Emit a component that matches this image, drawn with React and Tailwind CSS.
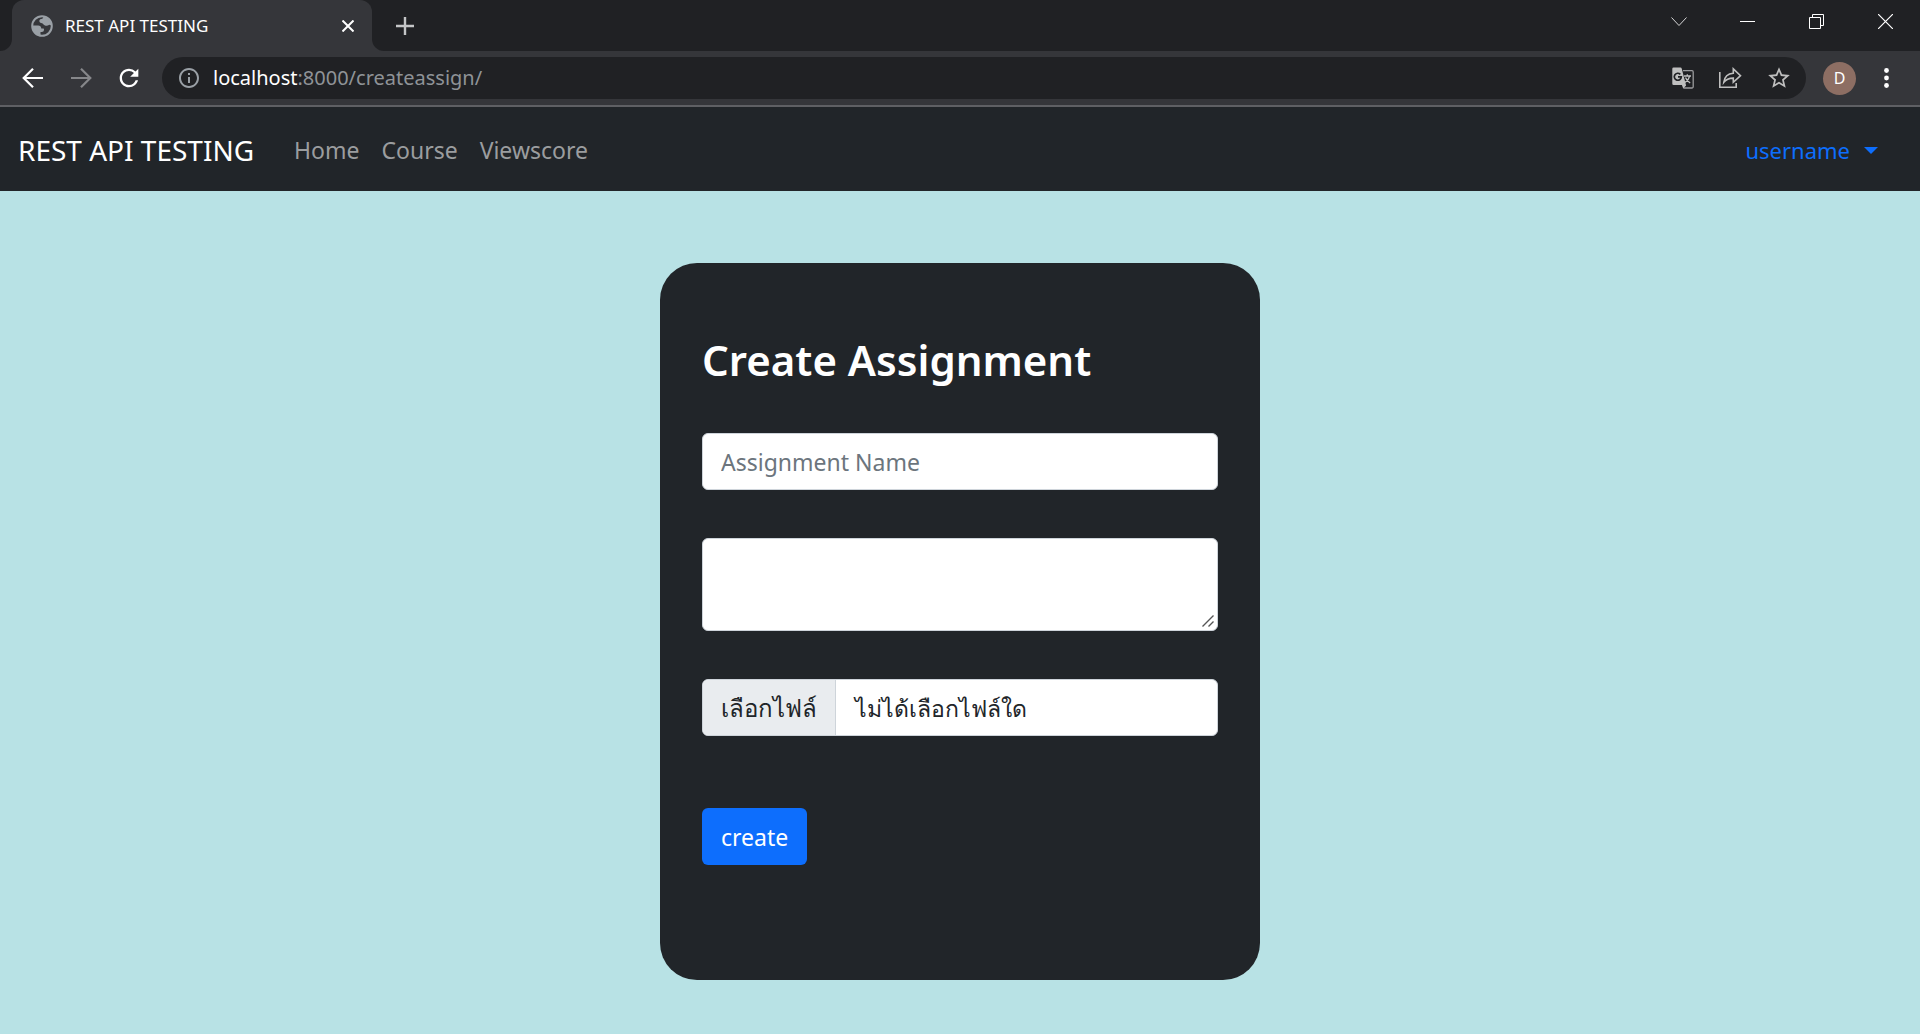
import { MdRefresh, MdInfoOutline, MdStarBorder } from "react-icons/md";

function GlobeIcon() {
  return (
    <svg viewBox="0 0 22 22" className="size-[22px] shrink-0" aria-hidden="true">
      <circle cx="11" cy="11" r="9.8" fill="none" stroke="#9aa0a6" strokeWidth="2" />
      <path
        fill="#9aa0a6"
        d="M12.5 1.5c-.3 1.6-.8 2.2-2.2 2.4-1.7.3-2.2 1.2-1.9 2.7.4 1.5 1.4 1.3 2.6 1.6 1.6.4 1.5 1.9 3 2.3 1.6.4 3 .1 4.3-.7l2.2.8A9.8 9.8 0 0 0 12.5 1.5zM1.5 10.5h5.7c1.9.1 3 1.1 3.1 2.9l2.3.2c.7.6.5 1.9-.1 2.6-.7.8-1.9.7-3 .7v3.6c-4.5-.5-8-4.5-8-10z"
      />
    </svg>
  );
}

function ArrowIcon({ className }) {
  return (
    <svg viewBox="0 0 28 28" className={className} fill="none" stroke="currentColor" strokeWidth="2.2" aria-hidden="true">
      <path d="M24 14H5.5M14 4.700L4.700 14l9.300 9.300" />
    </svg>
  );
}

function TranslateIcon() {
  return (
    <svg viewBox="0 0 22 22" className="size-[22px]" aria-hidden="true">
      <path d="M11 3.7h9a1.2 1.2 0 0 1 1.2 1.2v14.9a1.2 1.2 0 0 1-1.2 1.2h-8.5" fill="none" stroke="#9a9b9d" strokeWidth="1.3" />
      <path d="M1.6.5h6.9a1.3 1.3 0 0 1 1.2.9l4.4 17-2.9 3.1-1.3-3.5H1.6a1.3 1.3 0 0 1-1.3-1.3V1.8A1.3 1.3 0 0 1 1.6.5z" fill="#bfbfbf" />
      <path d="M8.3 7.3A3.5 3.5 0 1 0 9.3 9.8H6" fill="none" stroke="#202124" strokeWidth="1.7" />
      <path d="M12 9h7M15.3 7.3V9M17.7 9c-.7 3-2.5 5-4.7 6.5M13.5 10.5c.8 2.2 2.5 4 4.7 5.5" fill="none" stroke="#bfbfbf" strokeWidth="1.3" />
    </svg>
  );
}

function ShareIcon() {
  return (
    <svg viewBox="0 0 24 22" className="h-[22px] w-6" fill="none" stroke="#bfbfbf" aria-hidden="true">
      <path d="M1.8 5v15.3h16.4V16" strokeWidth="1.6" />
      <path d="M5.8 15.3c.7-5.6 3.7-8.8 9.5-9.1V1.8l7.2 6.9-7.2 6.6v-4.2c-4.2 0-7.3 1.2-9.5 4.2z" strokeWidth="1.6" />
    </svg>
  );
}

function TitleBar() {
  return (
    <header className="flex h-[51px] items-stretch justify-between bg-[#202124]">
      <div className="flex">
        <div className="w-3 bg-[#35363a]">
          <div className="h-full rounded-br-xl bg-[#202124]" />
        </div>
        <div className="flex w-[360px] items-center rounded-t-xl bg-[#35363a] pl-[19px] pr-3">
          <GlobeIcon />
          <span className="ml-3 grow text-[17px] leading-6 text-white">REST API TESTING</span>
          <button type="button" aria-label="Close tab" className="flex size-6 items-center justify-center">
            <svg viewBox="0 0 12 12" className="size-3" stroke="#fff" strokeWidth="2" aria-hidden="true">
              <path d="M.5.5l11 11M11.5.5l-11 11" />
            </svg>
          </button>
        </div>
        <div className="bg-[#35363a]">
          <div className="flex h-full items-center rounded-bl-xl bg-[#202124] pl-[21px]">
            <button type="button" aria-label="New tab" className="flex size-6 items-center justify-center">
              <svg viewBox="0 0 18 18" className="size-[18px]" stroke="#c4c5c7" strokeWidth="2.4" aria-hidden="true">
                <path d="M9 0v18M0 9h18" />
              </svg>
            </button>
          </div>
        </div>
      </div>
      <div className="flex h-[43px] items-center">
        <button type="button" aria-label="Search tabs" className="flex w-[69px] justify-center">
          <svg viewBox="0 0 16 10" className="h-2.5 w-4" fill="none" stroke="#d5d6d7" aria-hidden="true">
            <path d="M.5.5L8 8.5 15.5.5" />
          </svg>
        </button>
        <button type="button" aria-label="Minimize" className="flex w-[69px] justify-center">
          <svg viewBox="0 0 15 1" className="h-px w-[15px]" fill="#fff" aria-hidden="true">
            <path d="M0 0h15v1H0z" />
          </svg>
        </button>
        <button type="button" aria-label="Restore" className="flex w-[69px] justify-center">
          <svg viewBox="0 0 15 15" className="size-[15px]" fill="none" stroke="#fff" aria-hidden="true">
            <path d="M.5 3.5h11v11H.5zM3.5 3.5v-3h11v11h-3" />
          </svg>
        </button>
        <button type="button" aria-label="Close window" className="flex w-[69px] justify-center">
          <svg viewBox="0 0 15 15" className="size-[15px]" stroke="#fff" strokeWidth="1.2" aria-hidden="true">
            <path d="M0 0l15 15M15 0L0 15" />
          </svg>
        </button>
      </div>
    </header>
  );
}

function Toolbar() {
  return (
    <div className="flex items-center border-b-2 border-[#5f6064] bg-[#35363a] py-1.5 pl-[19px] pr-[22px]">
      <div className="flex gap-5">
        <button type="button" aria-label="Back"><ArrowIcon className="size-7 text-white" /></button>
        <button type="button" aria-label="Forward"><ArrowIcon className="size-7 rotate-180 text-[#86878a]" /></button>
        <button type="button" aria-label="Reload"><MdRefresh className="size-7 text-white" /></button>
      </div>
      <div className="ml-[19px] flex h-[42px] grow items-center rounded-full bg-[#202124] pl-[15px] pr-3.5">
        <MdInfoOutline className="size-6 shrink-0 text-[#9aa0a6]" aria-hidden="true" />
        <p className="ml-3 grow text-xl leading-7 text-[#8f9397]">
          <span className="text-white">localhost</span>:8000/createassign/
        </p>
        <div className="flex items-center gap-6">
          <button type="button" aria-label="Translate this page"><TranslateIcon /></button>
          <button type="button" aria-label="Share this page"><ShareIcon /></button>
          <button type="button" aria-label="Bookmark this page"><MdStarBorder className="size-[26px] text-[#bfbfbf]" /></button>
        </div>
      </div>
      <button type="button" aria-label="Profile" className="ml-[17px] size-[33px] rounded-full bg-[#8d6e63] text-base leading-8 text-white">D</button>
      <button type="button" aria-label="Menu" className="ml-[18px] flex w-6 justify-center">
        <svg viewBox="0 0 5 20" className="h-5 w-[5px]" fill="#fff" aria-hidden="true">
          <circle cx="2.5" cy="2.5" r="2.4" />
          <circle cx="2.5" cy="10" r="2.4" />
          <circle cx="2.5" cy="17.5" r="2.4" />
        </svg>
      </button>
    </div>
  );
}

function Navbar() {
  return (
    <nav className="flex h-[84px] items-center bg-[#212529] pl-[18px] pr-[42px] pt-0.5 text-[23px] leading-9 text-[#9b9d9f]">
      <a href="#top" className="text-[28px] text-white">REST API TESTING</a>
      <div className="ml-10 flex grow gap-[22px]">
        <a href="#home">Home</a>
        <a href="#course">Course</a>
        <a href="#viewscore">Viewscore</a>
      </div>
      <button type="button" className="flex items-center gap-3.5 text-[22px] text-[#0d6efd]">
        username
        <svg viewBox="0 0 14 7" className="h-[7px] w-3.5" fill="currentColor" aria-hidden="true">
          <path d="M0 0h14L7 7z" />
        </svg>
      </button>
    </nav>
  );
}

function AssignmentForm() {
  return (
    <form
      className="mx-auto flex w-full max-w-[600px] flex-col rounded-[37px] bg-[#212529] px-[42px] pb-[115px] pt-[70px] text-[23px] leading-9"
      onSubmit={(event) => event.preventDefault()}
    >
      <h1 className="text-[42px] font-semibold leading-[54px] text-white">Create Assignment</h1>
      <input
        type="text"
        aria-label="Assignment Name"
        placeholder="Assignment Name"
        className="mt-[46px] h-[57px] rounded-md border border-[#ced4da] bg-white px-[18px] text-[#212529] placeholder:text-[#6c757d]"
      />
      <div className="relative mt-12 flex">
        <textarea
          aria-label="Assignment description"
          className="h-[93px] w-full resize rounded-md border border-[#ced4da] bg-white px-[18px] py-2 text-[#212529] [&::-webkit-resizer]:hidden"
        />
        <svg viewBox="0 0 12 12" className="pointer-events-none absolute bottom-1 right-1 size-3" stroke="#555" strokeWidth="1.4" aria-hidden="true">
          <path d="M.5 11.5l11-11M6.5 11.5l5-5" />
        </svg>
      </div>
      <label className="mt-12 flex h-[57px] items-center overflow-hidden rounded-md border border-[#ced4da] bg-white text-[#212529]">
        <input type="file" className="sr-only" />
        <span className="flex h-full items-center border-r border-[#ced4da] bg-[#e9ecef] px-[18px] text-2xl">เลือกไฟล์</span>
        <span className="px-[19px]">ไม่ได้เลือกไฟล์ใด</span>
      </label>
      <button type="submit" className="mt-[72px] h-[57px] self-start rounded-md bg-[#0d6efd] px-[19px] text-white">
        create
      </button>
    </form>
  );
}

export default function App() {
  return (
    <div className="flex min-h-screen flex-col bg-[#b8e2e5] font-['Noto_Sans',sans-serif]">
      <TitleBar />
      <Toolbar />
      <Navbar />
      <main className="px-6 pb-12 pt-[72px]">
        <AssignmentForm />
      </main>
    </div>
  );
}
